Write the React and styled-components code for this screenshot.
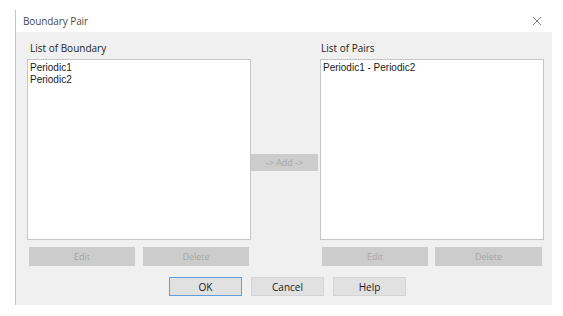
import React from "react";
import styled, { createGlobalStyle } from "styled-components";

const Global = createGlobalStyle`
  html, body { margin: 0; padding: 0; background: #ffffff; }
  body { font-family: "Open Sans", "Noto Sans", "Liberation Sans", sans-serif; }
`;

const Page = styled.div`
  width: 563px;
  height: 316px;
  background: #ffffff;
  padding: 10px 0 0 15px;
  box-sizing: border-box;
`;

const Window = styled.div`
  width: 536px;
  border-left: 1px solid #c4c4c4;
  display: flex;
  flex-direction: column;
`;

const TitleBar = styled.div`
  height: 22px;
  display: flex;
  align-items: center;
  justify-content: space-between;
  padding: 0 10px 0 7px;
  background: #ffffff;
`;

const Title = styled.span`
  font-size: 10px;
  color: #4a4a4a;
  letter-spacing: -0.1px;
`;

const Close = styled.svg`
  width: 10px;
  height: 10px;
`;

const Body = styled.div`
  background: #f0f0f0;
  height: 273px;
  box-sizing: border-box;
  padding: 0 0 0 11px;
  display: flex;
  flex-direction: column;
`;

const Columns = styled.div`
  display: grid;
  grid-template-columns: 224px 69px 224px;
  margin-top: 9px;
`;

const Column = styled.div`
  display: flex;
  flex-direction: column;
`;

const Label = styled.div`
  font-size: 10px;
  color: #222;
  height: 18px;
  line-height: 14px;
  padding-left: ${(p) => p.$indent}px;
`;

const ListBox = styled.div`
  height: 181px;
  background: #ffffff;
  border: 1px solid #c6c6c6;
  box-sizing: border-box;
  padding: 2px 2px 0;
`;

const Item = styled.div`
  font-family: "Liberation Sans", Arial, sans-serif;
  font-size: 10px;
  line-height: 11.5px;
  height: 11.5px;
  color: #1a1a1a;
  white-space: nowrap;
`;

const MiddleCol = styled.div`
  display: flex;
  align-items: center;
  justify-content: flex-start;
  padding-top: 18px;
`;

const ButtonPair = styled.div`
  display: flex;
  justify-content: space-between;
  padding: 0 2px 0 2px;
  margin-top: 7px;
`;

const DisabledButton = styled.div`
  width: ${(p) => p.$w}px;
  height: ${(p) => p.$h}px;
  background: #cccccc;
  display: flex;
  align-items: center;
  justify-content: center;
  font-size: 9px;
  color: #a6a6a6;
  box-sizing: border-box;
`;

const Footer = styled.div`
  display: flex;
  gap: 9px;
  margin-top: 11px;
  padding-left: 142px;
`;

const Button = styled.div`
  width: 73px;
  height: 19px;
  box-sizing: border-box;
  background: #e1e1e1;
  border: 1px solid ${(p) => (p.$default ? "#5f9fe0" : "#d4d4d4")};
  display: flex;
  align-items: center;
  justify-content: center;
  font-size: 10px;
  color: #1a1a1a;
`;

export default function App() {
  return (
    <>
      <Global />
      <Page>
        <Window>
          <TitleBar>
            <Title>Boundary Pair</Title>
            <Close viewBox="0 0 10 10">
              <path d="M1 1 L9 9 M9 1 L1 9" stroke="#808080" strokeWidth="1" fill="none" />
            </Close>
          </TitleBar>
          <Body>
            <Columns>
              <Column>
                <Label $indent={3}>List of Boundary</Label>
                <ListBox>
                  <Item>Periodic1</Item>
                  <Item>Periodic2</Item>
                </ListBox>
                <ButtonPair>
                  <DisabledButton $w={106} $h={19}>Edit</DisabledButton>
                  <DisabledButton $w={106} $h={19}>Delete</DisabledButton>
                </ButtonPair>
              </Column>
              <MiddleCol>
                <DisabledButton $w={67} $h={17}>-&gt; Add -&gt;</DisabledButton>
              </MiddleCol>
              <Column>
                <Label $indent={1}>List of Pairs</Label>
                <ListBox>
                  <Item>Periodic1 - Periodic2</Item>
                </ListBox>
                <ButtonPair>
                  <DisabledButton $w={106} $h={19}>Edit</DisabledButton>
                  <DisabledButton $w={107} $h={19}>Delete</DisabledButton>
                </ButtonPair>
              </Column>
            </Columns>
            <Footer>
              <Button $default>OK</Button>
              <Button>Cancel</Button>
              <Button>Help</Button>
            </Footer>
          </Body>
        </Window>
      </Page>
    </>
  );
}
